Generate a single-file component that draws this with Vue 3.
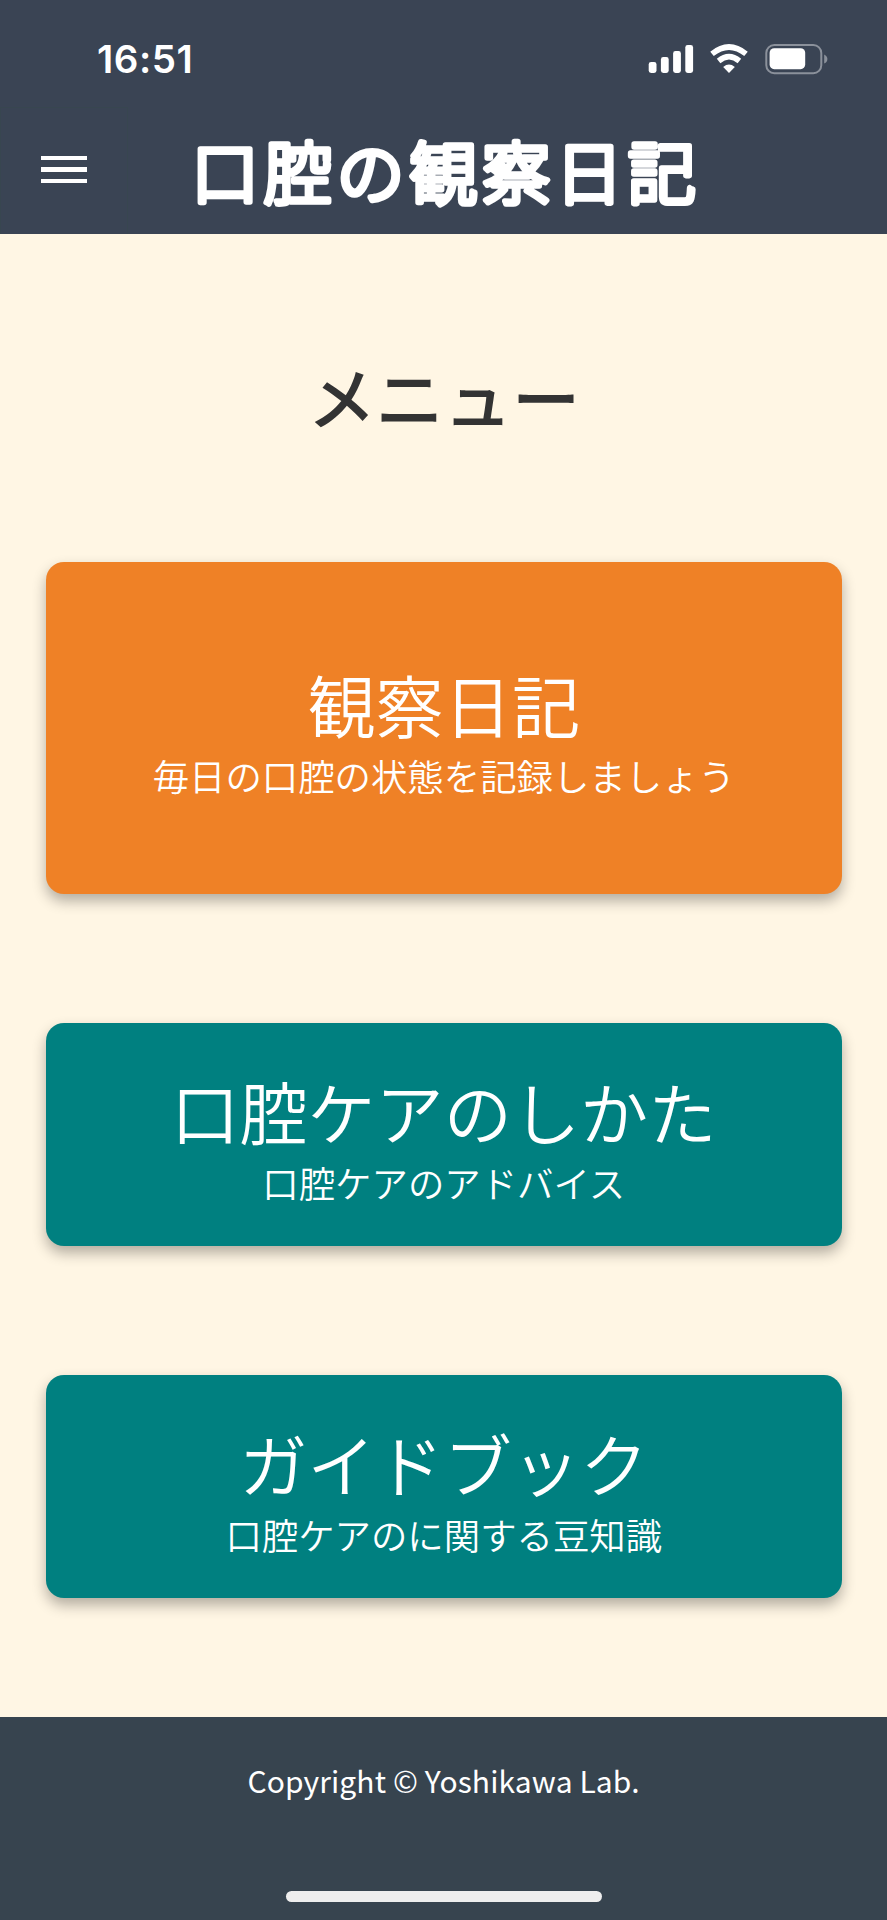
<template>
  <div class="app">
    <div class="status-bar">
      <span class="status-time">16:51</span>
      <svg class="status-icons" width="182" height="34" viewBox="0 0 182 34">
        <g fill="#fff">
          <rect x="0.7" y="20" width="7.8" height="11" rx="2.4" />
          <rect x="12.9" y="15" width="7.8" height="16" rx="2.4" />
          <rect x="25.1" y="9" width="7.8" height="22" rx="2.4" />
          <rect x="37.3" y="3" width="7.8" height="28" rx="2.4" />
        </g>
        <g fill="none" stroke="#fff" stroke-width="5.6">
          <path d="M64 11.9 Q81 -1.9 98 11.9" />
          <path d="M70.6 19 Q81 10.4 91.4 19" />
        </g>
        <path d="M75.2 24.9 Q81 20.3 86.8 24.9 L81 31 Z" fill="#fff" />
        <rect
          x="118.3"
          y="3"
          width="55"
          height="28.2"
          rx="8"
          fill="none"
          stroke="#8b919b"
          stroke-width="2"
        />
        <rect x="121.6" y="6.2" width="35.6" height="21" rx="4.6" fill="#fff" />
        <path d="M176.2 12.4 Q179.4 14 179.4 17 Q179.4 20 176.2 21.6 Z" fill="#8b919b" />
      </svg>
    </div>

    <header class="app-header">
      <button class="menu-button" type="button" aria-label="メニュー">
        <span class="menu-line" />
        <span class="menu-line" />
        <span class="menu-line" />
      </button>
      <svg class="app-title" width="520" height="126" viewBox="0 0 520 126">
        <text x="2" y="92">口腔の観察日記</text>
      </svg>
    </header>

    <main class="content">
      <h1 class="page-title">メニュー</h1>
      <div class="menu-list">
        <a
          v-for="item in menuItems"
          :key="item.title"
          class="menu-card"
          :class="{ 'menu-card-primary': item.primary }"
        >
          <span class="card-title">{{ item.title }}</span>
          <span class="card-text">{{ item.text }}</span>
        </a>
      </div>
    </main>

    <footer class="app-footer">
      <p class="copyright">Copyright © Yoshikawa Lab.</p>
      <div class="home-indicator" />
    </footer>
  </div>
</template>

<script setup>
const menuItems = [
  {
    title: '観察日記',
    text: '毎日の口腔の状態を記録しましょう',
    primary: true,
  },
  {
    title: '口腔ケアのしかた',
    text: '口腔ケアのアドバイス',
  },
  {
    title: 'ガイドブック',
    text: '口腔ケアのに関する豆知識',
  },
];
</script>

<style>
body {
  margin: 0;
}
</style>

<style scoped>
.app {
  display: flex;
  flex-direction: column;
  width: 887px;
  height: 1920px;
  overflow: hidden;
  background: #fff6e4;
  color: #fff;
  font-family: 'Noto Sans CJK JP', sans-serif;
}

.status-bar {
  display: flex;
  align-items: flex-start;
  justify-content: space-between;
  box-sizing: border-box;
  height: 107px;
  padding: 42px 57px 0 97px;
  background: #3a4454;
}

.status-time {
  font-family: Inter, sans-serif;
  font-size: 38.5px;
  font-weight: 600;
  letter-spacing: 0.5px;
  line-height: 34px;
}

.app-header {
  display: flex;
  height: 127px;
  background: #3a4454;
}

.menu-button {
  display: flex;
  flex-direction: column;
  align-items: center;
  justify-content: center;
  gap: 7px;
  box-sizing: border-box;
  width: 128px;
  height: 127px;
  padding: 0 0 3px;
  border: 1px solid #384650;
  border-bottom: 0;
  background: none;
}

.menu-line {
  width: 46px;
  height: 4.5px;
  background: #fff;
}

.app-title {
  margin-left: 61px;
}

/* 丸ゴシック風に角を丸める */
.app-title text {
  fill: #fff;
  stroke: #fff;
  stroke-width: 5.6px;
  stroke-linecap: round;
  stroke-linejoin: round;
  font-size: 68px;
  font-weight: 300;
  letter-spacing: 4.8px;
}

.content {
  flex: 1;
  padding: 0 45px 0 45.5px;
}

.page-title {
  margin: 111px 0 116px;
  color: #333;
  font-size: 68.2px;
  font-weight: 500;
  line-height: 101px;
  text-align: center;
}

.menu-list {
  display: flex;
  flex-direction: column;
  gap: 129px;
}

.menu-card {
  display: flex;
  flex-direction: column;
  align-items: center;
  justify-content: center;
  box-sizing: border-box;
  height: 223px;
  padding-top: 8px;
  border-radius: 18px;
  background: #008080;
  box-shadow: 0 7px 14px rgba(0, 0, 0, 0.3);
}

.menu-card-primary {
  height: 332px;
  background: #ef8126;
}

.card-title {
  font-size: 68.2px;
  font-weight: 350;
  line-height: 86px;
}

.card-text {
  font-size: 36.4px;
  font-weight: 350;
  line-height: 56px;
}

.app-footer {
  display: flex;
  flex-direction: column;
  align-items: center;
  justify-content: space-between;
  box-sizing: border-box;
  height: 203px;
  padding: 39px 0 18px;
  background: #37444f;
}

.copyright {
  margin: 0;
  font-size: 30px;
  font-weight: 400;
  letter-spacing: 0.1px;
  line-height: 48px;
}

.home-indicator {
  width: 316px;
  height: 11px;
  border-radius: 6px;
  background: #eee;
}
</style>
